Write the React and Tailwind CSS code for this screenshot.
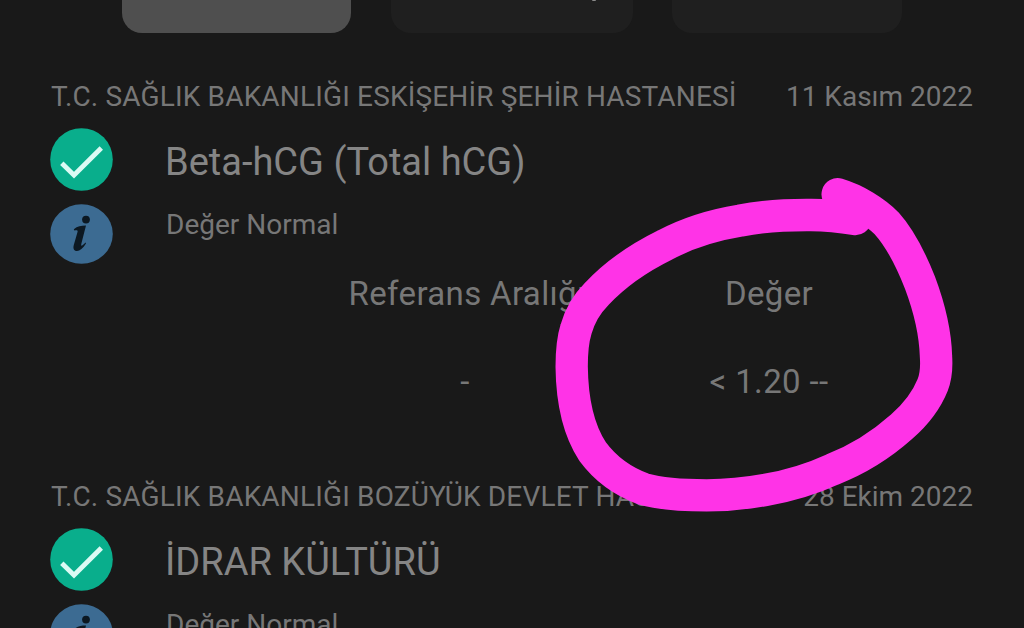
import React from 'react'

const records = [
    {
        hospital: 'T.C. SAĞLIK BAKANLIĞI ESKİŞEHİR ŞEHİR HASTANESİ',
        date: '11 Kasım 2022',
        test: 'Beta-hCG (Total hCG)',
        status: 'Değer Normal',
        result: { reference: '-', value: '< 1.20 --' },
    },
    {
        hospital: 'T.C. SAĞLIK BAKANLIĞI BOZÜYÜK DEVLET HASTANESİ',
        date: '28 Ekim 2022',
        test: 'İDRAR KÜLTÜRÜ',
        status: 'Değer Normal',
    },
]

const CheckIcon = () => (
    <svg className="h-[63px] w-[63px] shrink-0" viewBox="0 0 63 63">
        <circle cx="31.5" cy="31.5" r="31.3" fill="#09ae8c" />
        <path d="M11.8 35.2 L24 47.2 L51.3 20" fill="none" stroke="#dcfaf4" strokeWidth="4.8" />
    </svg>
)

const InfoIcon = () => (
    <svg className="h-[60px] w-[63px] shrink-0" viewBox="0 0 63 60">
        <ellipse cx="31.5" cy="30" rx="31.3" ry="29.8" fill="#3c6b92" />
        <circle cx="36" cy="15.6" r="3.9" fill="#0c1822" />
        <path
            d="M23.8 25.2 C27.5 22.4 31 21.6 36 21.6 L31.4 39.5 C30.7 42.3 31.6 42.8 35.4 38.6 L36 39.6 C33 44.4 29.8 47 27 47 C23.8 47 22.8 44.3 23.8 41 L27.6 27.8 C28 26 26.6 25.8 24.4 26.6 Z"
            fill="#0c1822"
        />
    </svg>
)

const Record = ({ record }) => (
    <section className="h-[400px] pl-[50px] pr-[51px]">
        <div className="flex h-[41px] items-center justify-between whitespace-nowrap pt-px text-[28px] text-[#777777]">
            <span className="pl-px tracking-[0.16px]">{record.hospital}</span>
            <span>{record.date}</span>
        </div>
        <div className="mt-[11px] flex h-[63px] gap-[52px]">
            <CheckIcon />
            <h2 className="text-[38px] leading-[68px] text-[#858585]">{record.test}</h2>
        </div>
        <div className="mt-[13px] flex h-[60px] gap-[52px]">
            <InfoIcon />
            <p className="pl-px text-[28px] leading-[41px] text-[#777777]">{record.status}</p>
        </div>
        {record.result && (
            <div className="ml-[266px] grid w-[604px] grid-cols-2 text-center text-[33px] tracking-[0.35px] text-[#777777]">
                <span className="leading-[59px]">Referans Aralığı</span>
                <span className="leading-[59px]">Değer</span>
                <span className="mt-[29px] pr-1 leading-[59px]">{record.result.reference}</span>
                <span className="mt-[29px] leading-[59px]">{record.result.value}</span>
            </div>
        )}
    </section>
)

const App = () => {
    return (
        <main className="relative h-[628px] w-[1024px] overflow-hidden bg-[#191919] font-['Roboto',sans-serif]">
            <div className="mb-[43px] flex h-[33px] pl-[122px]">
                <div className="w-[229px] rounded-b-[20px] bg-[#4f4f4f]"></div>
                <div className="ml-10 w-[242px] rounded-b-[20px] bg-[#1f1f1f] pl-[201px]">
                    <div className="h-px w-1 rounded-b bg-[#8a8a8a]"></div>
                </div>
                <div className="ml-[39px] w-[230px] rounded-b-[20px] bg-[#1f1f1f]"></div>
            </div>

            {records.map((record) => (
                <Record key={record.test} record={record} />
            ))}

            {/* marker circle drawn over the result */}
            <svg className="absolute left-[540px] top-[170px] h-[350px] w-[420px]" viewBox="0 0 1260 1050">
                <path
                    d="M893 73 C950 90 1005 125 1040 160 C1085 210 1115 275 1140 338 C1167 410 1186 485 1188 560 C1190 590 1188 620 1178 645 C1160 690 1125 735 1085 770 C1020 828 950 870 878 898 C815 927 745 948 675 960 C615 971 560 976 500 976 C430 976 365 973 310 957 C250 935 195 895 158 845 C112 775 96 680 95 590 C95 550 97 513 108 478 C120 436 142 400 170 372 C225 313 300 262 375 225 C445 188 520 165 600 152 C665 139 735 135 800 135 C850 134 900 139 946 147"
                    fill="none"
                    stroke="#ff33e7"
                    strokeWidth="97"
                    strokeLinecap="round"
                    strokeLinejoin="round"
                />
            </svg>
        </main>
    )
}

export default App
